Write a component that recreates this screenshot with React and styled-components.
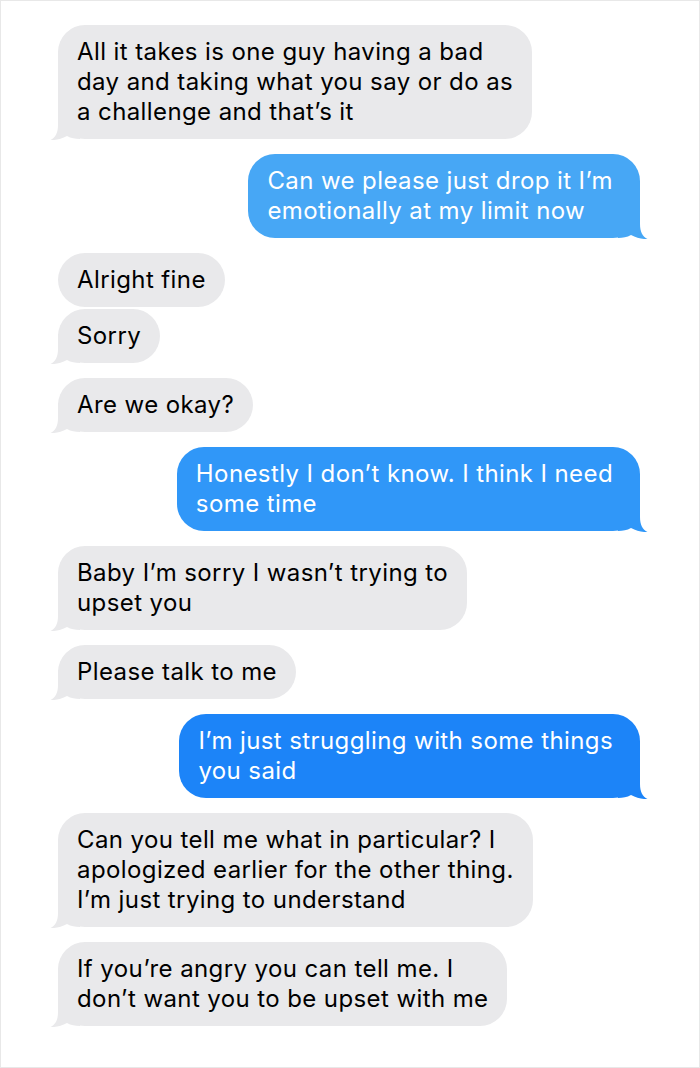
import React from 'react'
import styled, { createGlobalStyle } from 'styled-components'

const GlobalStyle = createGlobalStyle`
  html, body {
    margin: 0;
    padding: 0;
    background: #fff;
  }
  body {
    font-family: Inter, "Noto Sans", sans-serif;
    -webkit-font-smoothing: antialiased;
  }
`

const Screen = styled.div`
  width: 700px;
  height: 1068px;
  box-sizing: border-box;
  border: 1px solid #e8e8e8;
  padding-top: 24px;
  display: flex;
  flex-direction: column;
  overflow: hidden;
  background: #fff;
`

const Row = styled.div`
  display: flex;
  justify-content: ${p => (p.$mine ? 'flex-end' : 'flex-start')};
  padding: ${p => (p.$mine ? '0 59px 0 0' : '0 0 0 57px')};
  margin-top: ${p => (p.$grouped ? '2px' : '15px')};

  &:first-child {
    margin-top: 0;
  }
`

const Bubble = styled.div`
  position: relative;
  background: ${p => p.$color};
  color: ${p => (p.$mine ? '#fff' : '#000')};
  border-radius: 27px;
  padding: ${p => (p.$mine ? '12px 27px 12px 19px' : '12px 19px')};
  font-size: 24px;
  line-height: 30px;
  letter-spacing: 0.4px;
  white-space: nowrap;
`

// text sits above the tail so the tail's square never hides a letter
const Text = styled.span`
  position: relative;
  z-index: 1;
`

const Tail = styled.svg`
  position: absolute;
  z-index: 0;
  bottom: -1px;
  width: 30px;
  height: 30px;
  ${p => (p.$mine ? 'right: -8px;' : 'left: -8px; transform: scaleX(-1);')}
`

const GRAY = '#e9e9eb'

const messages = [
  { lines: ['All it takes is one guy having a bad', 'day and taking what you say or do as', 'a challenge and that\u2019s it'], tail: true },
  { mine: true, color: '#47a7f5', lines: ['Can we please just drop it I\u2019m', 'emotionally at my limit now'], tail: true },
  { lines: ['Alright fine'] },
  { grouped: true, lines: ['Sorry'], tail: true },
  { lines: ['Are we okay?'], tail: true },
  { mine: true, color: '#3097f8', lines: ['Honestly I don\u2019t know. I think I need', 'some time'], tail: true },
  { lines: ['Baby I\u2019m sorry I wasn\u2019t trying to', 'upset you'], tail: true },
  { lines: ['Please talk to me'], tail: true },
  { mine: true, color: '#1c84f8', lines: ['I\u2019m just struggling with some things', 'you said'], tail: true },
  { lines: ['Can you tell me what in particular? I', 'apologized earlier for the other thing.', 'I\u2019m just trying to understand'], tail: true },
  { lines: ['If you\u2019re angry you can tell me. I', 'don\u2019t want you to be upset with me'], tail: true },
]

const Message = ({ mine, grouped, color, lines, tail }) => {
  const fill = color || GRAY
  return (
    <Row $mine={mine} $grouped={grouped}>
      <Bubble $mine={mine} $color={fill}>
        {tail && (
          <Tail $mine={mine} viewBox="0 0 30 30">
            <path
              d="M0 0H22V15C22 23 24.5 27.5 29.5 30C24 30.4 18.5 28.8 13 26C9 28.2 5 29 0 29Z"
              fill={fill}
            />
          </Tail>
        )}
        <Text>
          {lines.map((line, i) => (
            <React.Fragment key={i}>
              {i > 0 && <br />}
              {line}
            </React.Fragment>
          ))}
        </Text>
      </Bubble>
    </Row>
  )
}

const App = () => (
  <>
    <GlobalStyle />
    <Screen>
      {messages.map((m, i) => (
        <Message key={i} {...m} />
      ))}
    </Screen>
  </>
)

export default App
